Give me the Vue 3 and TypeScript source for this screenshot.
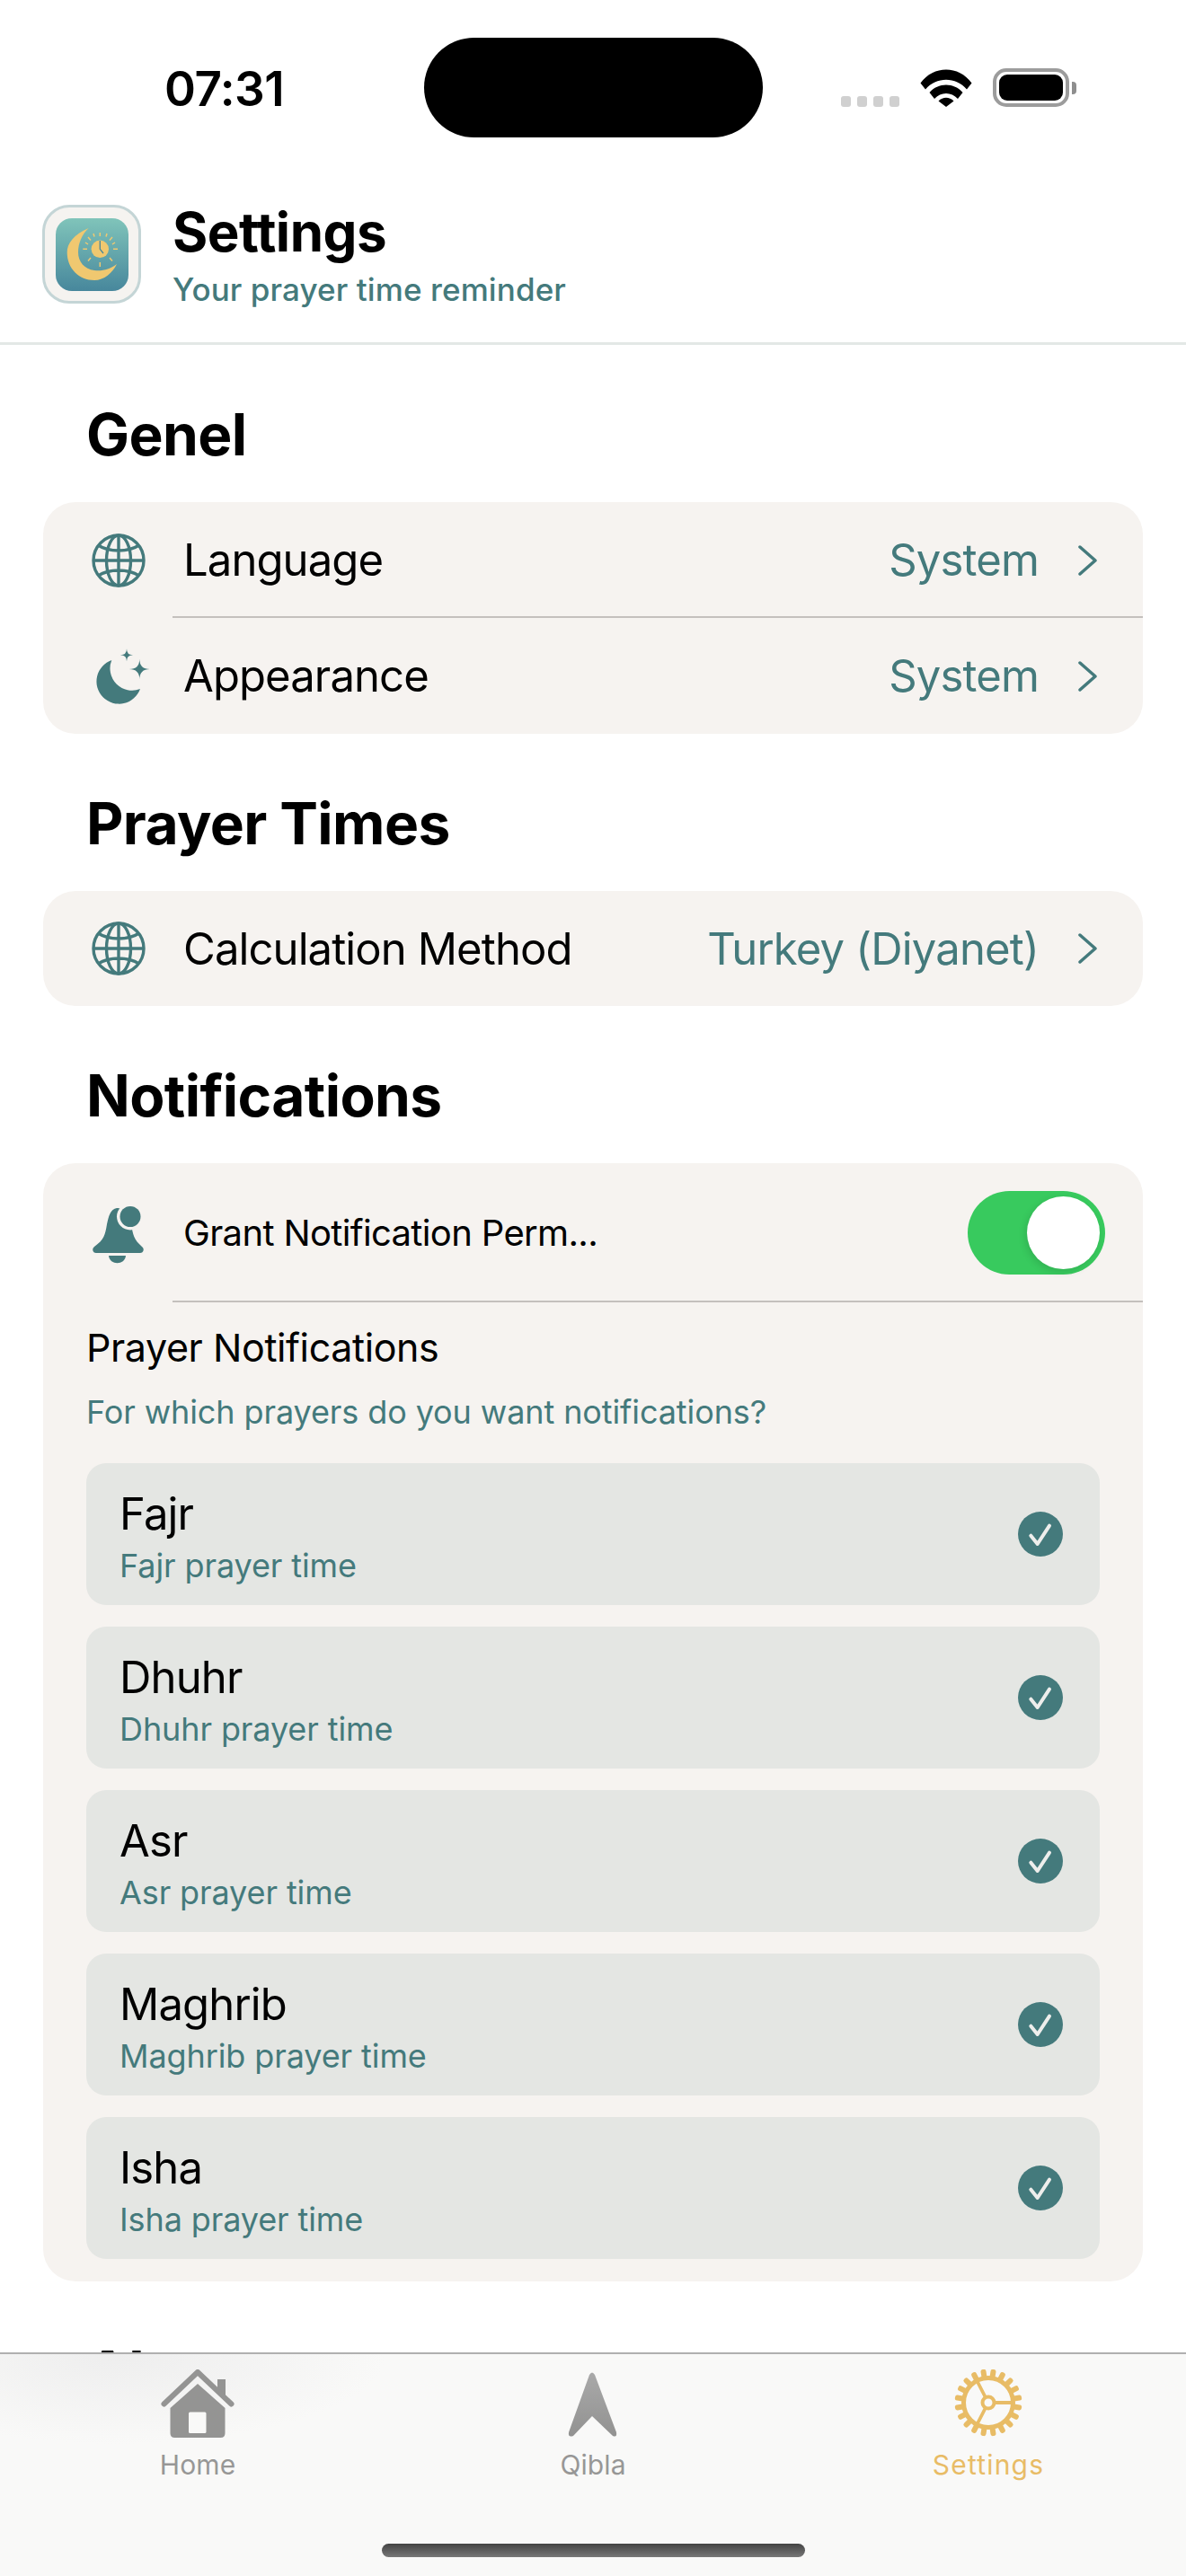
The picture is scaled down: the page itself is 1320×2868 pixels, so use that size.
<script setup lang="ts">
const prayers = ['Fajr', 'Dhuhr', 'Asr', 'Maghrib', 'Isha']

// gear teeth for the active tab icon
const teeth = Array.from({ length: 20 }, (_, i) => i * 18 + 9)
</script>

<template>
  <div class="screen">
    <div class="status">
      <span class="time">07:31</span>
      <div class="notch"></div>
      <div class="status-right">
        <div class="dots"><i></i><i></i><i></i><i></i></div>
        <svg class="wifi" width="58" height="43" viewBox="0 0 58 43">
          <path d="M0.500 16.500C15 -3.500 43 -3.500 57.500 16.500L52 23.500C40 9 18 9 6 23.500Z" />
          <path d="M10.500 27C20 15.500 38 15.500 47.500 27L42 34C35 26 23 26 16 34Z" />
          <path d="M20.500 36.500C25.500 31.500 32.500 31.500 37.500 36.500L29 43Z" />
        </svg>
        <div class="battery"><div class="battery-fill"></div></div>
        <div class="battery-cap"></div>
      </div>
    </div>

    <header class="header">
      <div class="app-icon">
        <svg width="81" height="81" viewBox="0 0 81 81">
          <defs>
            <linearGradient id="iconBg" x1="0" y1="0" x2="0" y2="1">
              <stop offset="0" stop-color="#80c4ba" />
              <stop offset="1" stop-color="#47879c" />
            </linearGradient>
          </defs>
          <rect width="81" height="81" rx="18" fill="url(#iconBg)" />
          <path
            d="M36.700 11C20 18 12.700 28 12.700 38C12.700 56 26 69 43 69C54 69 63 61 68 51C60 57 52 59 43 58C32 57 25 48 25 38C25 28 29 18 36.700 11Z"
            fill="#f0c870"
          />
          <circle cx="49.300" cy="34.300" r="9.700" fill="#f0c870" />
          <path d="M49.300 25V34.300L53 39" stroke="#47879c" stroke-width="1.300" fill="none" />
          <path
            d="M49.300 16V20M49.300 49V54M30.300 34.300H35M64 34.300H69M36 21L39 24.500M60 44L63 47.500M63 21L60 24.500M39 44L36 47.500M42 17L43 20.500M57 17L56 20.500M33 27L36 29M66 27L63 29"
            stroke="#f0c870"
            stroke-width="1.500"
            fill="none"
          />
        </svg>
      </div>
      <div>
        <div class="header-title">Settings</div>
        <div class="header-sub">Your prayer time reminder</div>
      </div>
    </header>

    <main class="content">
      <h2>Genel</h2>
      <section class="card">
        <div class="row divided">
          <svg class="row-icon" width="72" height="72" viewBox="0 0 72 72">
            <g fill="none" stroke="#447a7c" stroke-width="3.400">
              <circle cx="36" cy="36" r="28" />
              <ellipse cx="36" cy="36" rx="13.500" ry="28" />
              <path d="M36 8V64M8 36H64M13 19C26 27 46 27 59 19M13 53C26 45 46 45 59 53" />
            </g>
          </svg>
          <span class="row-label">Language</span>
          <span class="row-value">System</span>
          <svg class="chevron" width="22" height="36" viewBox="0 0 22 36">
            <path d="M2 3L19 18L2 33" />
          </svg>
        </div>
        <div class="row">
          <svg class="row-icon" width="72" height="72" viewBox="0 0 72 72">
            <g fill="#447a7c">
              <path d="M28.300 18A25 25 0 1 0 60 50A24.500 24.500 0 0 1 28.300 18Z" />
              <path d="M45 5.300Q45 12.300 52 12.300Q45 12.300 45 19.300Q45 12.300 38 12.300Q45 12.300 45 5.300Z" />
              <path d="M59.300 16.500Q59.300 28 70.800 28Q59.300 28 59.300 39.500Q59.300 28 47.800 28Q59.300 28 59.300 16.500Z" />
            </g>
          </svg>
          <span class="row-label">Appearance</span>
          <span class="row-value">System</span>
          <svg class="chevron" width="22" height="36" viewBox="0 0 22 36">
            <path d="M2 3L19 18L2 33" />
          </svg>
        </div>
      </section>

      <h2>Prayer Times</h2>
      <section class="card">
        <div class="row single">
          <svg class="row-icon" width="72" height="72" viewBox="0 0 72 72">
            <g fill="none" stroke="#447a7c" stroke-width="3.400">
              <circle cx="36" cy="36" r="28" />
              <ellipse cx="36" cy="36" rx="13.500" ry="28" />
              <path d="M36 8V64M8 36H64M13 19C26 27 46 27 59 19M13 53C26 45 46 45 59 53" />
            </g>
          </svg>
          <span class="row-label">Calculation Method</span>
          <span class="row-value">Turkey (Diyanet)</span>
          <svg class="chevron" width="22" height="36" viewBox="0 0 22 36">
            <path d="M2 3L19 18L2 33" />
          </svg>
        </div>
      </section>

      <h2>Notifications</h2>
      <section class="card">
        <div class="row toggle-row divided">
          <svg class="row-icon" width="72" height="72" viewBox="0 0 72 72">
            <path
              d="M34 8C27 9 25 17 23 26C21 38 20 43 9 51C6 53 7 58 11 58H60C64 58 65 53 62 51C53 43 52 38 50 26C49 17 42 7 34 8Z"
              fill="#447a7c"
            />
            <path d="M25 61H44C43 72 26 72 25 61Z" fill="#447a7c" />
            <circle cx="49" cy="17.500" r="15" fill="#f6f3f0" />
            <circle cx="49" cy="17.500" r="11.500" fill="#447a7c" />
          </svg>
          <span class="row-label small">Grant Notification Perm...</span>
          <div class="toggle"><div class="knob"></div></div>
        </div>
        <div class="prayer-block">
          <div class="block-title">Prayer Notifications</div>
          <div class="block-sub">For which prayers do you want notifications?</div>
          <div class="prayer-list">
            <div v-for="p in prayers" :key="p" class="prayer">
              <div class="prayer-text">
                <div class="prayer-name">{{ p }}</div>
                <div class="prayer-sub">{{ p }} prayer time</div>
              </div>
              <svg width="52" height="52" viewBox="0 0 52 52">
                <circle cx="26" cy="26" r="25" fill="#447a7c" />
                <path d="M15.300 27.700L22.700 37L36 16.700" fill="none" stroke="#eeeeec" stroke-width="4" stroke-linecap="round" stroke-linejoin="round" />
              </svg>
            </div>
          </div>
        </div>
      </section>

      <h2 class="peek">About</h2>
    </main>

    <nav class="tabs">
      <div class="tab">
        <svg width="90" height="80" viewBox="0 0 90 80">
          <path d="M67 11H76V28H67Z" fill="#949493" />
          <path d="M7.500 38.500L45 3L82.500 38.500" fill="none" stroke="#949493" stroke-width="6" stroke-linecap="round" stroke-linejoin="round" />
          <path d="M45 16L75.500 43V71Q75.500 76 70.500 76H19.500Q14.500 76 14.500 71V43Z" fill="#949493" />
          <rect x="35" y="47.500" width="19.500" height="23.500" rx="1.500" fill="#f9f9f8" />
        </svg>
        <span>Home</span>
      </div>
      <div class="tab">
        <svg width="60" height="80" viewBox="0 0 60 80">
          <defs>
            <linearGradient id="qibla" x1="0" y1="0" x2="0" y2="1">
              <stop offset="0" stop-color="#a9a9a9" />
              <stop offset="1" stop-color="#929291" />
            </linearGradient>
          </defs>
          <path d="M26 6Q29 1 32 6L56 70Q57 76 52 74L29 52L8 74Q2 76 3 70Z" fill="url(#qibla)" />
        </svg>
        <span>Qibla</span>
      </div>
      <div class="tab active">
        <svg width="80" height="80" viewBox="0 3 80 80">
          <g fill="#e8bc66">
            <rect v-for="a in teeth" :key="a" x="37" y="2.500" width="6" height="11" rx="2.500" :transform="`rotate(${a} 40 40)`" />
          </g>
          <g fill="none" stroke="#e8bc66" stroke-width="5">
            <circle cx="40" cy="40" r="27.500" fill="#f9f9f8" />
            <circle cx="40" cy="40" r="6.500" stroke-width="4" />
            <path d="M47 40H67M36.500 33.500L27 15M36.500 46.500L27 65" stroke-width="3.800" />
          </g>
        </svg>
        <span>Settings</span>
      </div>
      <div class="home-bar"></div>
    </nav>
  </div>
</template>

<style scoped>
.screen {
  position: relative;
  width: 1320px;
  height: 2868px;
  overflow: hidden;
  background: #fff;
  font-family: Inter, "Liberation Sans", sans-serif;
  color: #000;
}

.status {
  position: relative;
  height: 190px;
  display: flex;
  justify-content: space-between;
  box-sizing: border-box;
  padding: 66px 122px 0 183px;
}
.time {
  font-size: 53px;
  line-height: 66px;
  font-weight: 600;
  letter-spacing: -0.5px;
}
.notch {
  position: absolute;
  left: 472px;
  top: 42px;
  width: 377px;
  height: 111px;
  border-radius: 56px;
  background: #000;
}
.status-right {
  display: flex;
  align-items: flex-end;
  height: 43px;
  margin-top: 10px;
}
.dots {
  display: flex;
  gap: 7px;
  margin-right: 23px;
}
.dots i {
  width: 11px;
  height: 12px;
  border-radius: 3px;
  background: #d0d0d0;
}
.wifi {
  margin-right: 23px;
  fill: #000;
}
.battery {
  width: 85px;
  height: 43px;
  box-sizing: border-box;
  border: 4px solid #9c9c9c;
  border-radius: 15px;
  padding: 3px;
}
.battery-fill {
  height: 100%;
  border-radius: 9px;
  background: #000;
}
.battery-cap {
  width: 5px;
  height: 14px;
  margin: 0 0 14px 3px;
  border-radius: 0 4px 4px 0;
  background: #8e8e8e;
}

.header {
  height: 194px;
  box-sizing: border-box;
  display: flex;
  align-items: flex-start;
  gap: 35px;
  padding: 38px 0 0 47px;
  border-bottom: 3px solid #e3e8e6;
}
.app-icon {
  width: 110px;
  height: 110px;
  box-sizing: border-box;
  border: 3px solid #c4d5d6;
  border-radius: 30px;
  background: #f5f3f0;
  display: flex;
  align-items: center;
  justify-content: center;
}
.app-icon svg {
  display: block;
}
.header-title {
  margin-top: -3px;
  font-size: 60px;
  line-height: 66px;
  font-weight: 700;
  letter-spacing: -0.5px;
}
.header-sub {
  font-size: 35px;
  line-height: 44px;
  margin-top: 9px;
  color: #447a7c;
  font-weight: 500;
  letter-spacing: 0.1px;
}

.content {
  padding: 0 48px;
}
h2 {
  margin: 62px 0 37px 48px;
  font-size: 64px;
  line-height: 76px;
  font-weight: 700;
  letter-spacing: -0.6px;
}
h2.peek {
  margin-top: 63px;
}
.card {
  background: #f6f3f0;
  border-radius: 36px;
  overflow: hidden;
}
.row {
  position: relative;
  height: 129px;
  display: flex;
  align-items: center;
  padding: 0 26px 0 48px;
}
.row.single {
  height: 128px;
}
.row.divided::after {
  content: '';
  position: absolute;
  left: 144px;
  right: 0;
  bottom: 0;
  height: 2px;
  background: #c4c0bd;
}
.row-icon {
  flex: none;
  margin-right: 36px;
}
.row-label {
  flex: 1;
  font-size: 49px;
  letter-spacing: -0.9px;
}
.row-label.small {
  font-size: 40px;
  letter-spacing: -0.65px;
}
.row-value {
  font-size: 49px;
  color: #447a7c;
  letter-spacing: -0.84px;
  margin-right: 44px;
}
.chevron {
  flex: none;
  margin-right: 24px;
  fill: none;
  stroke: #447a7c;
  stroke-width: 3.500;
  stroke-linecap: round;
  stroke-linejoin: round;
}
.toggle-row {
  height: 155px;
}
.toggle {
  width: 153px;
  height: 93px;
  margin-right: 16px;
  box-sizing: border-box;
  padding: 6px;
  border-radius: 47px;
  background: #38ca5e;
  display: flex;
  justify-content: flex-end;
}
.knob {
  width: 81px;
  height: 81px;
  border-radius: 50%;
  background: #fff;
  box-shadow: -2px 3px 8px rgba(0, 0, 0, 0.12);
}

.prayer-block {
  padding: 22px 48px 25px;
}
.block-title {
  font-size: 43px;
  line-height: 56px;
  letter-spacing: -0.4px;
}
.block-sub {
  margin-top: 22px;
  font-size: 36px;
  line-height: 44px;
  color: #447a7c;
  letter-spacing: -0.1px;
}
.prayer-list {
  margin-top: 35px;
  display: flex;
  flex-direction: column;
  gap: 24px;
}
.prayer {
  height: 158px;
  box-sizing: border-box;
  padding: 0 40px 0 37px;
  border-radius: 22px;
  background: #e4e6e3;
  display: flex;
  align-items: center;
  justify-content: space-between;
}
.prayer-text {
  padding-top: 5px;
}
.prayer-name {
  font-size: 49px;
  line-height: 60px;
  letter-spacing: -0.84px;
}
.prayer-sub {
  font-size: 36px;
  line-height: 44px;
  margin-top: 5px;
  color: #447a7c;
  letter-spacing: -0.1px;
}

.tabs {
  position: absolute;
  left: 0;
  right: 0;
  bottom: 0;
  height: 249px;
  box-sizing: border-box;
  display: flex;
  padding-top: 17px;
  border-top: 2px solid #b0b0b0;
  background: radial-gradient(ellipse 300px 100px at 130px 0, #eeeeee, rgba(238, 238, 238, 0)), #f9f9f8;
}
.tab {
  flex: 1;
  display: flex;
  flex-direction: column;
  align-items: center;
  font-size: 30px;
  line-height: 40px;
  color: #979796;
  gap: 6px;
  letter-spacing: 0.1px;
}
.tab svg {
  display: block;
}
.tab.active {
  color: #e8bc66;
  letter-spacing: 1.2px;
}
.home-bar {
  position: absolute;
  left: 425px;
  bottom: 21px;
  width: 471px;
  height: 15px;
  border-radius: 8px;
  background: linear-gradient(#444, #777);
}
</style>

<style>
body {
  margin: 0;
}
</style>
